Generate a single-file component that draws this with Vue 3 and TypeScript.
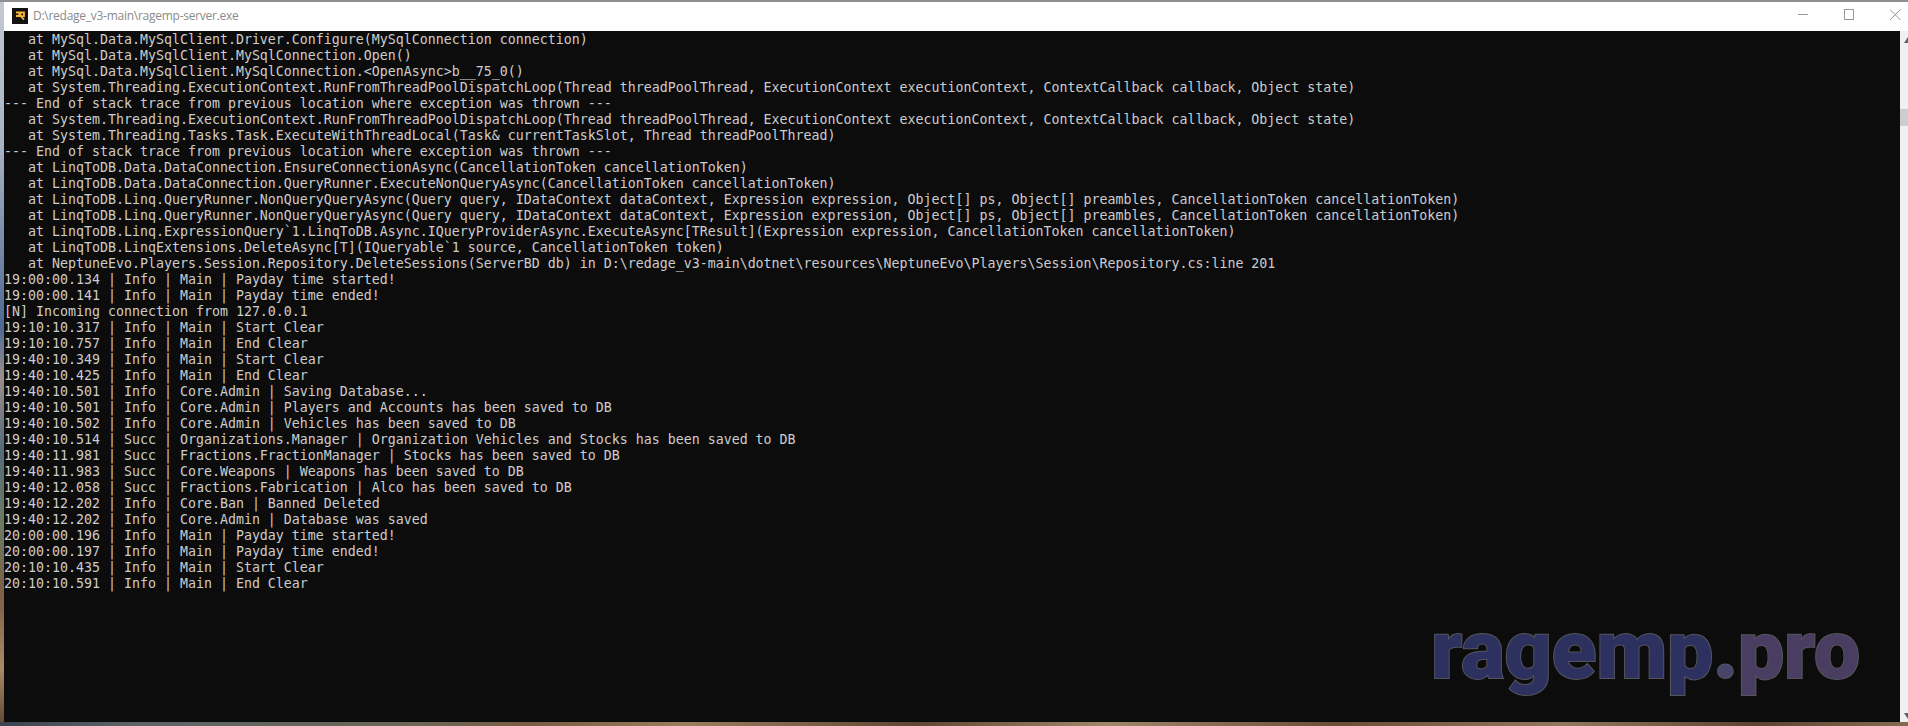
<script setup lang="ts">
const lines: string[] = [
  '   at MySql.Data.MySqlClient.Driver.Configure(MySqlConnection connection)',
  '   at MySql.Data.MySqlClient.MySqlConnection.Open()',
  '   at MySql.Data.MySqlClient.MySqlConnection.<OpenAsync>b__75_0()',
  '   at System.Threading.ExecutionContext.RunFromThreadPoolDispatchLoop(Thread threadPoolThread, ExecutionContext executionContext, ContextCallback callback, Object state)',
  '--- End of stack trace from previous location where exception was thrown ---',
  '   at System.Threading.ExecutionContext.RunFromThreadPoolDispatchLoop(Thread threadPoolThread, ExecutionContext executionContext, ContextCallback callback, Object state)',
  '   at System.Threading.Tasks.Task.ExecuteWithThreadLocal(Task& currentTaskSlot, Thread threadPoolThread)',
  '--- End of stack trace from previous location where exception was thrown ---',
  '   at LinqToDB.Data.DataConnection.EnsureConnectionAsync(CancellationToken cancellationToken)',
  '   at LinqToDB.Data.DataConnection.QueryRunner.ExecuteNonQueryAsync(CancellationToken cancellationToken)',
  '   at LinqToDB.Linq.QueryRunner.NonQueryQueryAsync(Query query, IDataContext dataContext, Expression expression, Object[] ps, Object[] preambles, CancellationToken cancellationToken)',
  '   at LinqToDB.Linq.QueryRunner.NonQueryQueryAsync(Query query, IDataContext dataContext, Expression expression, Object[] ps, Object[] preambles, CancellationToken cancellationToken)',
  '   at LinqToDB.Linq.ExpressionQuery`1.LinqToDB.Async.IQueryProviderAsync.ExecuteAsync[TResult](Expression expression, CancellationToken cancellationToken)',
  '   at LinqToDB.LinqExtensions.DeleteAsync[T](IQueryable`1 source, CancellationToken token)',
  '   at NeptuneEvo.Players.Session.Repository.DeleteSessions(ServerBD db) in D:\\redage_v3-main\\dotnet\\resources\\NeptuneEvo\\Players\\Session\\Repository.cs:line 201',
  '19:00:00.134 | Info | Main | Payday time started!',
  '19:00:00.141 | Info | Main | Payday time ended!',
  '[N] Incoming connection from 127.0.0.1',
  '19:10:10.317 | Info | Main | Start Clear',
  '19:10:10.757 | Info | Main | End Clear',
  '19:40:10.349 | Info | Main | Start Clear',
  '19:40:10.425 | Info | Main | End Clear',
  '19:40:10.501 | Info | Core.Admin | Saving Database...',
  '19:40:10.501 | Info | Core.Admin | Players and Accounts has been saved to DB',
  '19:40:10.502 | Info | Core.Admin | Vehicles has been saved to DB',
  '19:40:10.514 | Succ | Organizations.Manager | Organization Vehicles and Stocks has been saved to DB',
  '19:40:11.981 | Succ | Fractions.FractionManager | Stocks has been saved to DB',
  '19:40:11.983 | Succ | Core.Weapons | Weapons has been saved to DB',
  '19:40:12.058 | Succ | Fractions.Fabrication | Alco has been saved to DB',
  '19:40:12.202 | Info | Core.Ban | Banned Deleted',
  '19:40:12.202 | Info | Core.Admin | Database was saved',
  '20:00:00.196 | Info | Main | Payday time started!',
  '20:00:00.197 | Info | Main | Payday time ended!',
  '20:10:10.435 | Info | Main | Start Clear',
  '20:10:10.591 | Info | Main | End Clear',
]
</script>

<template>
  <div class="desktop">
    <div class="window">
      <header class="titlebar">
        <svg class="app-icon" width="16" height="16" viewBox="0 0 16 16">
          <rect width="16" height="16" fill="#141210" />
          <path d="M4 4.5h8v3.6H8.8M4 8h4.6l3.4 3.6M6.4 6.3h3" fill="none" stroke="#f4b63a" stroke-width="1.8" />
        </svg>
        <span class="title">D:\redage_v3-main\ragemp-server.exe</span>
        <div class="controls">
          <svg class="ctl" width="46" height="12" viewBox="0 0 46 12"><path d="M18 5.5h10" stroke="#999" fill="none" /></svg>
          <svg class="ctl" width="46" height="12" viewBox="0 0 46 12"><rect x="18.5" y="0.5" width="9" height="10" stroke="#999" fill="none" /></svg>
          <svg class="ctl" width="46" height="12" viewBox="0 0 46 12"><path d="M18 0.5l10.5 10.5M28.5 0.5L18 11" stroke="#999" fill="none" /></svg>
        </div>
      </header>
      <main class="body">
        <div class="console">
          <div v-for="(line, i) in lines" :key="i" class="line">{{ line }}</div>
          <div class="watermark"><span class="wm-blue">ragemp</span><span class="wm-dot">.</span><span class="wm-purple">pro</span></div>
        </div>
        <aside class="scrollbar">
          <span class="arrow-up"></span>
          <span class="thumb"></span>
          <span class="arrow-down"></span>
        </aside>
      </main>
    </div>
  </div>
</template>

<style>
html, body { margin: 0; background: #0c0c0c; overflow: hidden; }
</style>

<style scoped>
.desktop {
  width: 1908px;
  height: 726px;
  box-sizing: border-box;
  padding: 2px 0 4px 4px;
  display: flex;
  background:
    linear-gradient(#8f8f8f, #8f8f8f) top left / 100% 2px no-repeat,
    linear-gradient(90deg, #3b4250 0, #5c6468 7%, #6b6655 22%, #7a5c42 28%, #9a7d5e 36%, #5e4632 48%, #a08769 58%, #6a4d37 70%, #91775b 82%, #5c4330 92%, #846a50 100%) bottom left / 100% 4px no-repeat,
    linear-gradient(180deg, #c4cad2 0, #a8b2c2 20%, #4e6a92 45%, #9b8f8c 52%, #566b78 62%, #6d7a62 72%, #7c5f45 82%, #a88a66 92%, #5f4733 100%);
}
.window {
  flex: 1;
  min-width: 0;
  display: flex;
  flex-direction: column;
}
.titlebar {
  height: 29px;
  flex: none;
  background: #fff;
  display: flex;
  align-items: center;
  padding: 0 0 0 8px;
}
.app-icon {
  display: block;
  margin-top: -2px;
}
.title {
  margin-left: 5px;
  margin-top: -2px;
  font: 12px "Open Sans", sans-serif;
  color: #8a8a8a;
  letter-spacing: -0.022em;
  white-space: pre;
}
.controls {
  margin-left: auto;
  display: flex;
  align-items: center;
  margin-top: -3px;
  margin-right: -10px;
}
.ctl {
  display: block;
}
.body {
  flex: 1;
  min-height: 0;
  display: flex;
}
.console {
  position: relative;
  flex: 1;
  min-width: 0;
  padding-top: 1px;
  background: #0c0c0c;
  color: #cccccc;
  font-family: "DejaVu Sans Mono", monospace;
  font-size: 13.29px;
  line-height: 16px;
  overflow: hidden;
}
.line {
  height: 16px;
  white-space: pre;
}
.watermark {
  position: absolute;
  right: 40px;
  bottom: 27px;
  font-family: Roboto, sans-serif;
  font-weight: 900;
  font-size: 82px;
  line-height: 90px;
  -webkit-text-stroke: 2px #55555c;
  paint-order: stroke fill;
}
.wm-blue {
  color: #2c3160;
}
.wm-dot {
  color: #47456a;
}
.wm-purple {
  color: #4a3d62;
}
.scrollbar {
  position: relative;
  flex: none;
  width: 8px;
  background: #f0f0f0;
}
.thumb {
  position: absolute;
  left: 0;
  right: 0;
  top: 78px;
  height: 17px;
  background: #cdcdcd;
}
.arrow-up {
  position: absolute;
  right: 0;
  top: 6px;
  border-style: solid;
  border-width: 0 0 6px 4px;
  border-color: transparent transparent #606060 transparent;
}
.arrow-down {
  position: absolute;
  right: 0;
  bottom: 3px;
  border-style: solid;
  border-width: 6px 0 0 4px;
  border-color: #606060 transparent transparent transparent;
}
</style>
